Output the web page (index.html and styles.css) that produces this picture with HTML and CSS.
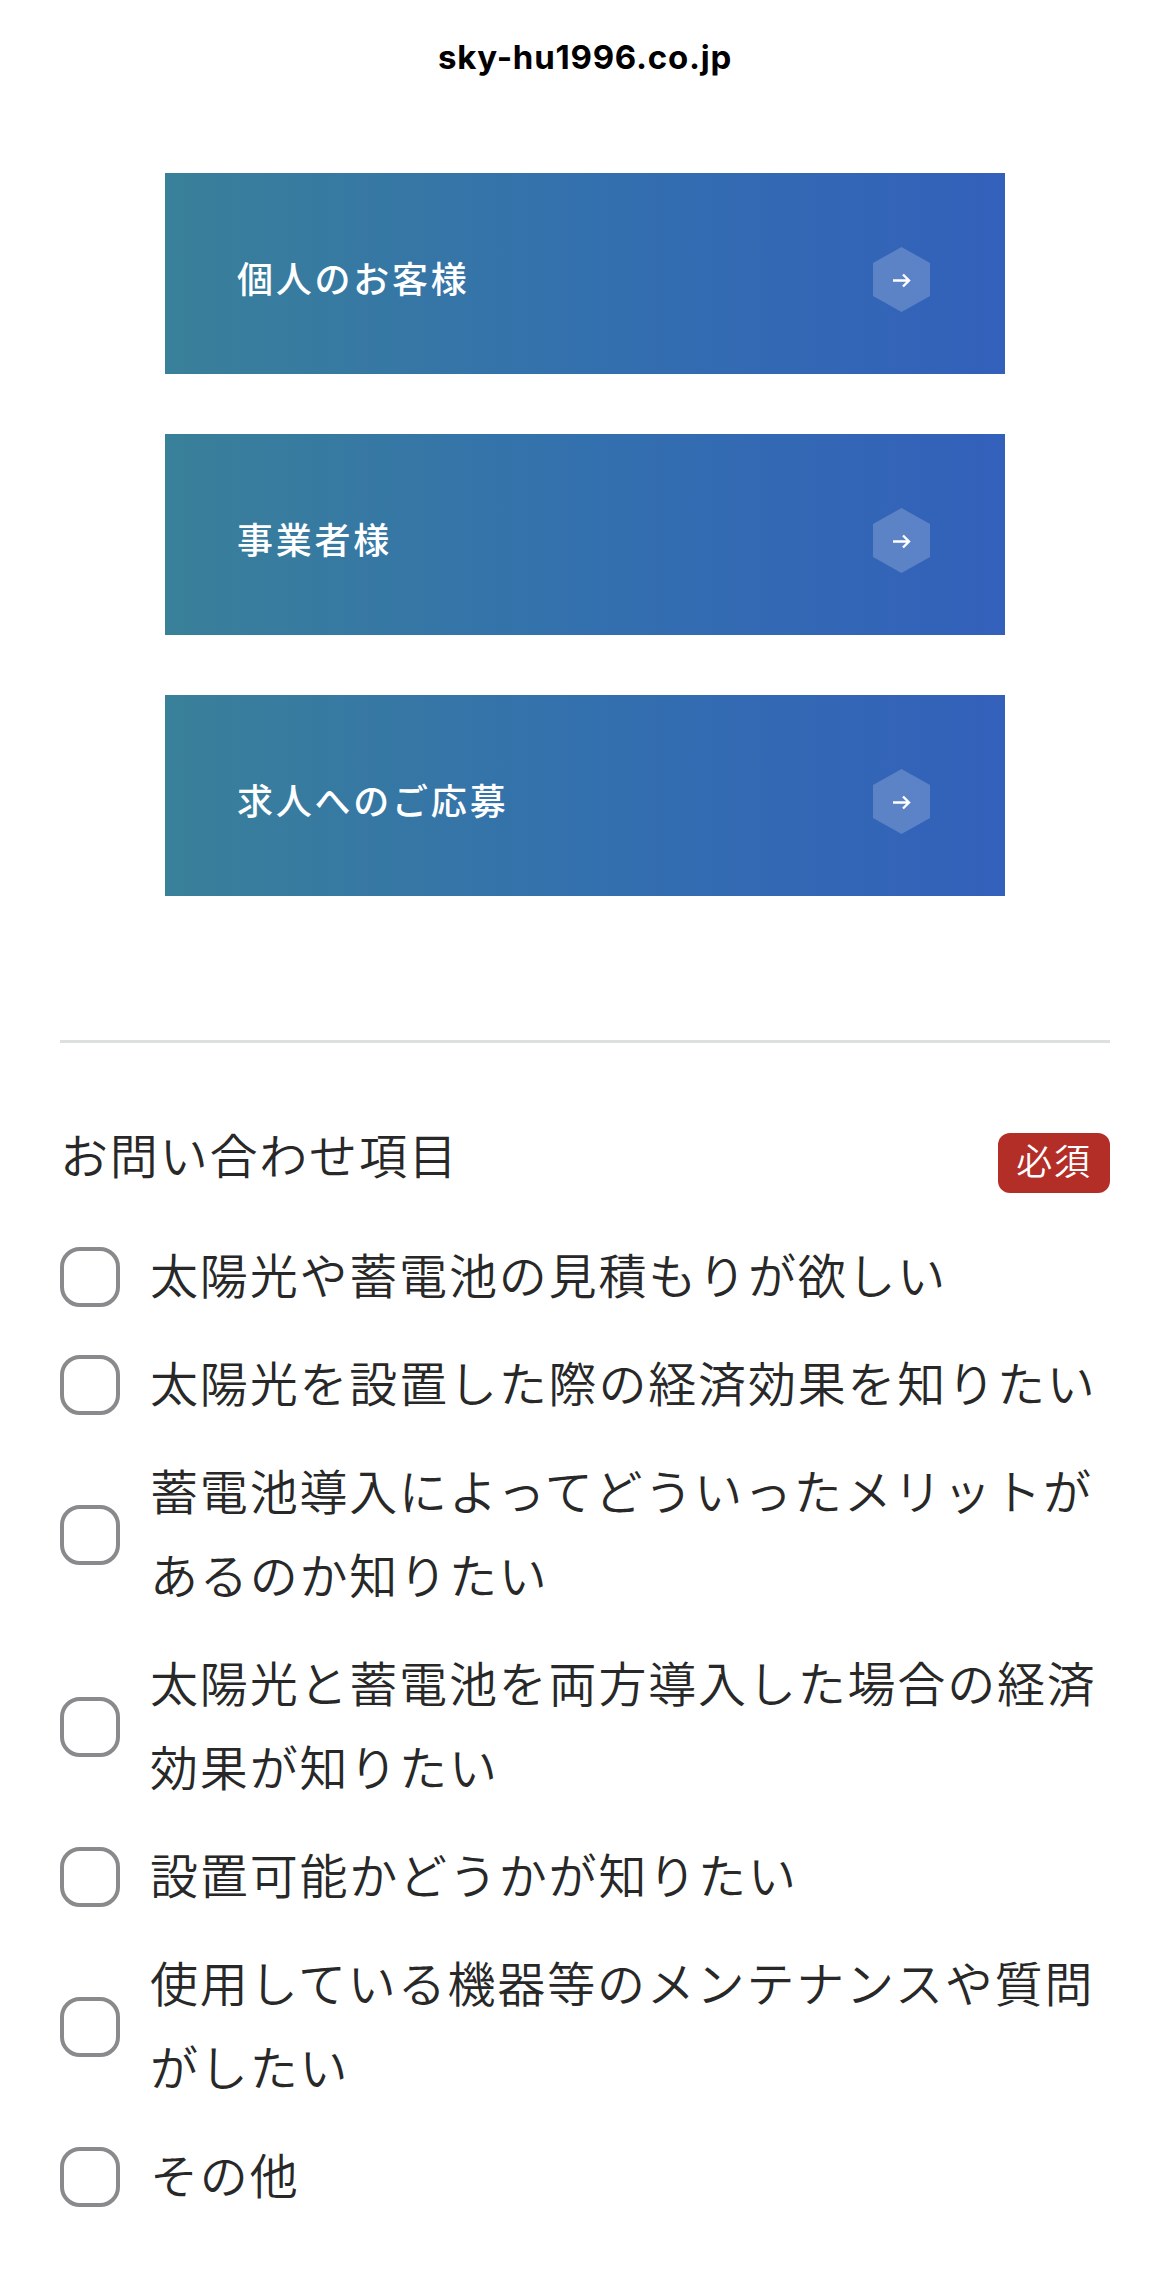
FILE: index.html
```html
<!DOCTYPE html>
<html lang="ja">
<head>
    <meta charset="UTF-8">
    <title>お問い合わせ</title>
    <link rel="stylesheet" href="styles.css">
</head>
<body>
    <header class="site-bar">sky-hu1996.co.jp</header>

    <nav class="contact-nav">
        <a class="contact-link" href="#">
            <span>個人のお客様</span>
            <svg class="hex" viewBox="0 0 57 65">
                <path class="hex-bg" d="M28.5 0L57 16V49L28.5 65L0 49V16Z"/>
                <path class="hex-arrow" d="M20 33.5H36M30 27.5L36 33.5L30 39.5"/>
            </svg>
        </a>
        <a class="contact-link" href="#">
            <span>事業者様</span>
            <svg class="hex" viewBox="0 0 57 65">
                <path class="hex-bg" d="M28.5 0L57 16V49L28.5 65L0 49V16Z"/>
                <path class="hex-arrow" d="M20 33.5H36M30 27.5L36 33.5L30 39.5"/>
            </svg>
        </a>
        <a class="contact-link" href="#">
            <span>求人へのご応募</span>
            <svg class="hex" viewBox="0 0 57 65">
                <path class="hex-bg" d="M28.5 0L57 16V49L28.5 65L0 49V16Z"/>
                <path class="hex-arrow" d="M20 33.5H36M30 27.5L36 33.5L30 39.5"/>
            </svg>
        </a>
    </nav>

    <form class="form">
        <div class="form-head">
            <span>お問い合わせ項目</span>
            <span class="required">必須</span>
        </div>
        <div class="options">
            <label class="option"><input type="checkbox"><span>太陽光や蓄電池の見積もりが欲しい</span></label>
            <label class="option"><input type="checkbox"><span>太陽光を設置した際の経済効果を知りたい</span></label>
            <label class="option"><input type="checkbox"><span>蓄電池導入によってどういったメリットがあるのか知りたい</span></label>
            <label class="option"><input type="checkbox"><span>太陽光と蓄電池を両方導入した場合の経済効果が知りたい</span></label>
            <label class="option"><input type="checkbox"><span>設置可能かどうかが知りたい</span></label>
            <label class="option"><input type="checkbox"><span>使用している機器等のメンテナンスや質問がしたい</span></label>
            <label class="option"><input type="checkbox"><span>その他</span></label>
        </div>
    </form>
</body>
</html>
```
FILE: styles.css
```css
:root {
    --text: #282828;
    --line: #dedfdf;
    --required: #b42e28;
}

* {
    box-sizing: border-box;
}

body {
    margin: 0;
    background: #fff;
    color: var(--text);
    font-family: "Noto Sans CJK JP", sans-serif;
    font-weight: 350;
    font-size: 48px;
    line-height: 84px;
    letter-spacing: 0.038em;
}

.site-bar {
    height: 113px;
    color: #000;
    font-family: Inter, sans-serif;
    font-size: 33px;
    font-weight: 700;
    line-height: 114px;
    letter-spacing: 0.023em;
    text-align: center;
}

/* グラデーションのリンクボタン */
.contact-nav {
    display: flex;
    flex-direction: column;
    gap: 60px;
    width: 840px;
    margin: 60px auto 0;
}

.contact-link {
    display: flex;
    align-items: center;
    justify-content: space-between;
    height: 201px;
    padding: 7px 75px 0 72px;
    background: linear-gradient(90deg, #398099, #3370ae 50%, #3360bb);
    color: #fff;
    font-size: 36px;
    font-weight: 500;
    letter-spacing: 0.077em;
    text-decoration: none;
}

.hex {
    width: 57px;
    height: 65px;
    margin-top: 5px;
}

.hex-bg {
    fill: rgba(255, 255, 255, 0.2);
}

.hex-arrow {
    fill: none;
    stroke: #fff;
    stroke-width: 2.4;
}

/* お問い合わせフォーム */
.form {
    margin: 144px 60px 0;
    padding-top: 68px;
    border-top: 3px solid var(--line);
}

.form-head {
    display: flex;
    align-items: flex-start;
    justify-content: space-between;
    margin-bottom: 40px;
}

.required {
    width: 112px;
    height: 60px;
    margin-top: 22px;
    border-radius: 12px;
    background: var(--required);
    color: #fff;
    font-size: 36px;
    line-height: 53px;
    text-align: center;
}

.options {
    display: flex;
    flex-direction: column;
    gap: 24px;
}

.option {
    display: flex;
    align-items: center;
    gap: 30px;
}

.option span {
    margin: -4px 0 4px;
}

.option input {
    appearance: none;
    flex-shrink: 0;
    width: 60px;
    height: 60px;
    margin: 0;
    border: 4px solid #8a8a8c;
    border-radius: 20px;
}
```
